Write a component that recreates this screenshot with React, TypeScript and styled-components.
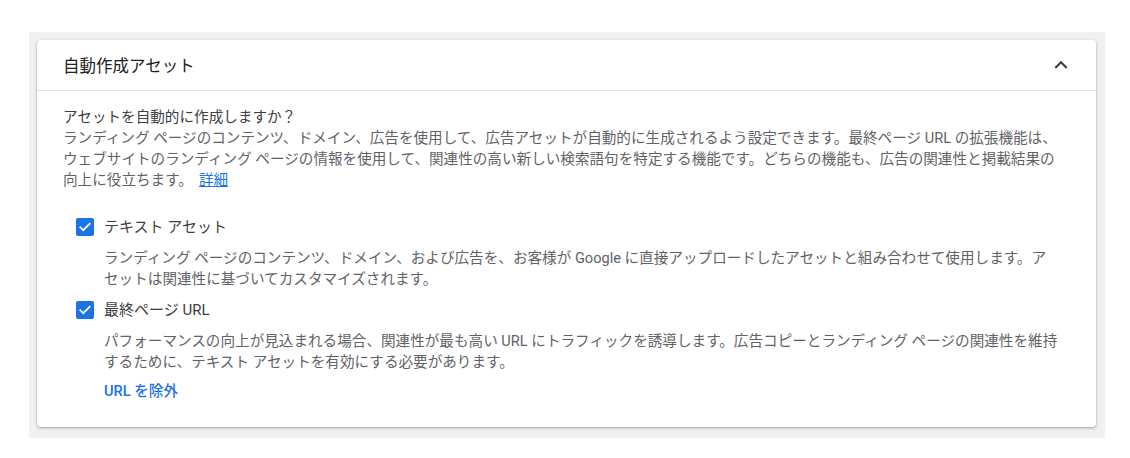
import React from "react";
import styled, { createGlobalStyle } from "styled-components";

const GlobalStyle = createGlobalStyle`
  body {
    margin: 0;
    background: #ffffff;
    font-family: Roboto, "Noto Sans CJK JP", sans-serif;
  }
`;

const Page = styled.div`
  padding: 32px 25px 20px 29px;
`;

const Backdrop = styled.div`
  background: #f0f1f2;
  padding: 8px 9px 11px 8px;
`;

const Card = styled.section`
  background: #ffffff;
  border-radius: 4px;
  box-shadow: 0 1px 2px rgba(60, 64, 67, 0.3), 0 1px 3px 1px rgba(60, 64, 67, 0.12);
`;

const Header = styled.div`
  display: flex;
  align-items: center;
  justify-content: space-between;
  height: 50px;
  padding: 0 22px 0 26px;
  border-bottom: 1px solid #e0e0e0;
`;

const Title = styled.h2`
  margin: 0;
  font-size: 16.5px;
  font-weight: 400;
  color: #202124;
`;

const Body = styled.div`
  padding: 16px 26px 26px 26px;
  font-size: 14.6px;
  line-height: 21px;
`;

const Question = styled.div`
  color: #3c4043;
`;

const Description = styled.p`
  margin: 0;
  color: #5f6368;
  white-space: nowrap;
`;

const Link = styled.a`
  color: #1a73e8;
  text-decoration: underline;
  margin-left: 6px;
  cursor: pointer;
`;

const Options = styled.div`
  margin-top: 24px;
  display: flex;
  flex-direction: column;
  gap: 9px;
`;

const Option = styled.div`
  display: flex;
  flex-direction: column;
`;

const OptionRow = styled.label`
  display: flex;
  align-items: center;
  gap: 10px;
  height: 24px;
  padding-left: 13px;
  font-size: 15px;
  color: #3c4043;
`;

const Box = styled.span`
  width: 18px;
  height: 18px;
  border-radius: 2px;
  background: #1a73e8;
  display: flex;
  align-items: center;
  justify-content: center;
`;

const OptionText = styled(Description)`
  margin: 9px 0 0 41px;
  line-height: 20.5px;
`;

const Action = styled.a`
  margin: 9px 0 0 41px;
  color: #1a73e8;
  font-weight: 500;
  font-size: 14.6px;
  line-height: 20px;
  cursor: pointer;
`;

function Check() {
  return (
    <Box>
      <svg width="14" height="14" viewBox="0 0 24 24">
        <path
          d="M4 12.5l5 5L20 6.5"
          fill="none"
          stroke="#ffffff"
          strokeWidth="3.2"
          strokeLinecap="square"
        />
      </svg>
    </Box>
  );
}

function ChevronUp() {
  return (
    <svg width="26" height="26" viewBox="0 0 24 24">
      <path d="M12 8l-6 6 1.41 1.41L12 10.83l4.59 4.58L18 14z" fill="#3c4043" />
    </svg>
  );
}

export default function App() {
  return (
    <Page>
      <GlobalStyle />
      <Backdrop>
        <Card>
          <Header>
            <Title>自動作成アセット</Title>
            <ChevronUp />
          </Header>
          <Body>
            <Question>アセットを自動的に作成しますか？</Question>
            <Description>
              ランディング ページのコンテンツ、ドメイン、広告を使用して、広告アセットが自動的に生成されるよう設定できます。最終ページ URL の拡張機能は、
              <br />
              ウェブサイトのランディング ページの情報を使用して、関連性の高い新しい検索語句を特定する機能です。どちらの機能も、広告の関連性と掲載結果の
              <br />
              向上に役立ちます。<Link>詳細</Link>
            </Description>
            <Options>
              <Option>
                <OptionRow>
                  <Check />
                  テキスト アセット
                </OptionRow>
                <OptionText>
                  ランディング ページのコンテンツ、ドメイン、および広告を、お客様が Google に直接アップロードしたアセットと組み合わせて使用します。ア
                  <br />
                  セットは関連性に基づいてカスタマイズされます。
                </OptionText>
              </Option>
              <Option>
                <OptionRow>
                  <Check />
                  最終ページ URL
                </OptionRow>
                <OptionText>
                  パフォーマンスの向上が見込まれる場合、関連性が最も高い URL にトラフィックを誘導します。広告コピーとランディング ページの関連性を維持
                  <br />
                  するために、テキスト アセットを有効にする必要があります。
                </OptionText>
                <Action>URL を除外</Action>
              </Option>
            </Options>
          </Body>
        </Card>
      </Backdrop>
    </Page>
  );
}
